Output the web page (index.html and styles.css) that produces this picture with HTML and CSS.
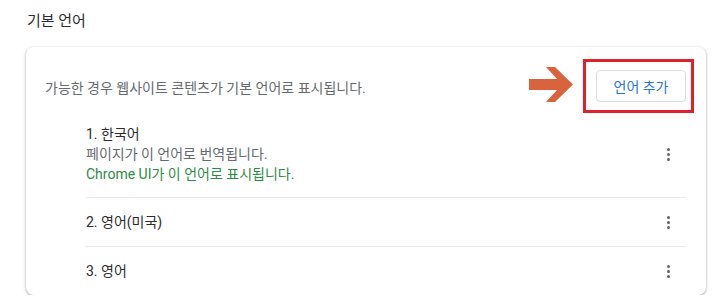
FILE: index.html
```html
<!DOCTYPE html>
<html lang="ko">
<head>
  <meta charset="UTF-8">
  <title>기본 언어</title>
  <link rel="stylesheet" href="styles.css">
</head>
<body>
  <h2 class="section-title">기본 언어</h2>

  <div class="card">
    <div class="card-head">
      <span class="desc">가능한 경우 웹사이트 콘텐츠가 기본 언어로 표시됩니다.</span>
      <button class="add-btn">언어 추가</button>

      <!-- annotation: arrow + red box -->
      <svg class="mark-arrow" width="45" height="36" viewBox="0 0 45 36">
        <polygon fill="#d9633c" points="0,12 28,12 17,0 26,0 44,17.5 26,35 17,35 28,23 0,23"/>
      </svg>
      <div class="mark-box"></div>
    </div>

    <div class="lang-list">
      <div class="lang-item">
        <div class="lang-text">
          <div>1. 한국어</div>
          <div class="sub">페이지가 이 언어로 번역됩니다.</div>
          <div class="ui-note">Chrome UI가 이 언어로 표시됩니다.</div>
        </div>
        <span class="more"><i></i><i></i><i></i></span>
      </div>
      <div class="lang-item">
        <div class="lang-text">2. 영어(미국)</div>
        <span class="more"><i></i><i></i><i></i></span>
      </div>
      <div class="lang-item">
        <div class="lang-text">3. 영어</div>
        <span class="more"><i></i><i></i><i></i></span>
      </div>
    </div>
  </div>
</body>
</html>
```

FILE: styles.css
```css
body {
  margin: 0;
  padding: 11px 13px 0 26px;
  background: #fff;
  font-family: Roboto, "Noto Sans CJK KR", sans-serif;
  font-size: 14px;
  color: #2b2c2f;
}
.section-title {
  margin: 0 0 16px 1px;
  font-size: 15px;
  font-weight: normal;
  line-height: 20px;
}
.card {
  width: 680px;
  border-radius: 8px;
  background: #fff;
  box-shadow: 0 1px 2px rgba(60, 64, 67, 0.3), 0 1px 3px 1px rgba(60, 64, 67, 0.15);
}
.card-head {
  position: relative;
  display: flex;
  align-items: center;
  justify-content: space-between;
  padding: 23px 20px 10px 19px;
}
.desc {
  color: #666a6f;
  line-height: 20px;
  padding-top: 3px;
}
.add-btn {
  width: 90px;
  height: 32px;
  border: 1px solid #dadce0;
  border-radius: 4px;
  background: #fff;
  color: #2a74d6;
  font-family: inherit;
  font-size: 14px;
}
.mark-arrow {
  position: absolute;
  left: 503px;
  top: 20px;
}
.mark-box {
  position: absolute;
  left: 557px;
  top: 12px;
  width: 105px;
  height: 48px;
  border: 3px solid #e0212b;
}
.lang-list {
  margin: 0 20px 0 60px;
}
.lang-item {
  display: flex;
  align-items: center;
  justify-content: space-between;
  min-height: 48px;
  line-height: 20px;
  border-top: 1px solid #e8eaed;
}
.lang-item:first-child {
  border-top: none;
  padding: 12px 0 13px;
}
.sub {
  color: #666a6f;
}
.ui-note {
  color: #2e8b45;
}
.more {
  display: flex;
  flex-direction: column;
  align-items: center;
  gap: 2px;
  width: 36px;
}
.more i {
  width: 3px;
  height: 3px;
  border-radius: 50%;
  background: #5f6368;
}
```
